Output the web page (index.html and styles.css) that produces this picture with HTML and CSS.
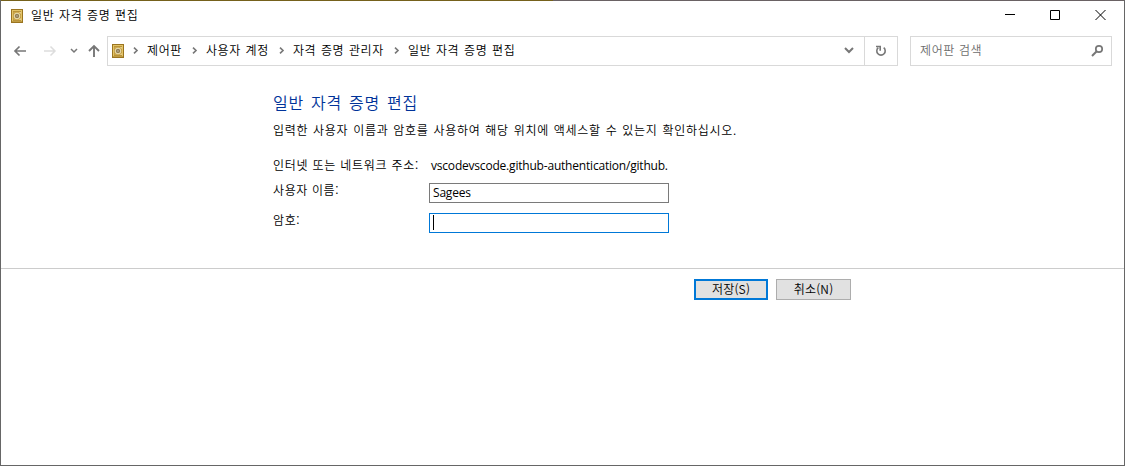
FILE: index.html
```html
<!DOCTYPE html>
<html lang="ko">
<head>
<meta charset="utf-8">
<title>일반 자격 증명 편집</title>
<link rel="stylesheet" href="styles.css">
</head>
<body>
<svg width="0" height="0" class="defs">
  <symbol id="vault" viewBox="0 0 12 14">
    <rect width="12" height="14" fill="#9a7420"/>
    <rect x="1" y="1" width="10" height="11.5" fill="#e3c466"/>
    <rect x="2" y="2" width="8" height="10" fill="#b8923a"/>
    <rect x="2.5" y="3" width="7" height="8" fill="#cda94e"/>
    <circle cx="6" cy="7" r="2.8" fill="#a08a58" stroke="#f1e6bd" stroke-width=".9"/>
    <circle cx="6" cy="7" r="1.1" fill="#eee8d5" stroke="#6b5730" stroke-width=".6"/>
    <path d="M8.5 3.5h1v1M9.5 9.5v1h-1" stroke="#f6e9b5" stroke-width=".8" fill="none"/>
  </symbol>
  <symbol id="chevron" viewBox="0 0 6 7"><path d="M1 .6 4 3.500 1 6.400" fill="none" stroke="#777" stroke-width="1.600"/></symbol>
</svg>
<div class="window">
  <header class="titlebar">
    <svg class="vault"><use href="#vault"/></svg>
    <span class="title">일반 자격 증명 편집</span>
    <div class="controls">
      <svg width="12" height="12"><path d="M1 5.500h10" stroke="#000"/></svg>
      <svg width="12" height="12"><path d="M1.500 1.500h9v9h-9z" stroke="#000" fill="none"/></svg>
      <svg width="12" height="12"><path d="M1.500 1l10 10M11.500 1l-10 10" stroke="#000"/></svg>
    </div>
  </header>
  <nav class="toolbar">
    <svg class="back" width="14" height="12"><path d="M13 6H2M6.500 1.500 2 6l4.500 4.500" stroke="#777" stroke-width="1.700" fill="none"/></svg>
    <svg class="forward" width="14" height="12"><path d="M1 6h11M7.500 1.500 12 6l-4.500 4.500" stroke="#ddd" stroke-width="1.500" fill="none"/></svg>
    <svg class="recent" width="8" height="6"><path d="M1 1l3 3 3-3" stroke="#777" stroke-width="1.500" fill="none"/></svg>
    <svg class="up" width="12" height="14"><path d="M6 13V2M1 7l5-5 5 5" stroke="#777" stroke-width="1.900" fill="none"/></svg>
    <div class="address">
      <svg class="vault"><use href="#vault"/></svg>
      <svg class="sep"><use href="#chevron"/></svg><span>제어판</span>
      <svg class="sep"><use href="#chevron"/></svg><span>사용자 계정</span>
      <svg class="sep"><use href="#chevron"/></svg><span>자격 증명 관리자</span>
      <svg class="sep"><use href="#chevron"/></svg><span>일반 자격 증명 편집</span>
      <svg class="drop" width="10" height="7"><path d="M1 1l4 4 4-4" stroke="#777" stroke-width="2" fill="none"/></svg>
      <div class="refresh"><svg width="12" height="12"><path d="M8.700 2.700A4.200 4.200 0 1 1 3.300 2.700" stroke="#777" stroke-width="1.600" fill="none"/><path d="M1 1.500h4.200v4.200" stroke="#777" stroke-width="1.600" fill="none"/></svg></div>
    </div>
    <div class="search"><span>제어판 검색</span>
      <svg width="13" height="13"><circle cx="8" cy="5" r="3.200" stroke="#777" stroke-width="1.700" fill="none"/><path d="M5.700 7.300 1 12" stroke="#777" stroke-width="2"/></svg>
    </div>
  </nav>
  <main class="content">
    <h1>일반 자격 증명 편집</h1>
    <p class="intro">입력한 사용자 이름과 암호를 사용하여 해당 위치에 액세스할 수 있는지 확인하십시오.</p>
    <div class="row address-row"><span class="label wide">인터넷 또는 네트워크 주소:</span><span class="latin host">vscodevscode.github-authentication/github.</span></div>
    <div class="row"><span class="label">사용자 이름:</span><div class="field latin">Sagees</div></div>
    <div class="row"><span class="label">암호:</span><div class="field active"><i class="caret"></i></div></div>
  </main>
  <footer class="actions">
    <button class="primary">저장(S)</button>
    <button>취소(N)</button>
  </footer>
</div>
</body>
</html>
```
FILE: styles.css
```css
* { box-sizing: border-box; }
body { margin: 0; font: 350 12px/16px "Noto Sans CJK KR", sans-serif; color: #000; }
svg { display: block; flex: none; }
.defs { position: absolute; }
.window { height: 466px; border: 1px solid #666; border-top: 0; background: linear-gradient(90deg, #75611b 552px, #6a6264 552px) top / 100% 1px no-repeat #fff; padding-top: 1px; overflow: hidden; white-space: nowrap; }
.titlebar { height: 29px; display: flex; align-items: center; padding-left: 10px; }
.vault { width: 12px; height: 14px; }
.title { margin: -2px 0 0 8px; letter-spacing: .6px; word-spacing: .8px; }
.controls { margin-left: auto; display: flex; gap: 33px; padding-right: 18px; }
.controls svg { margin-top: -1px; }
.toolbar { height: 41px; display: flex; align-items: center; padding-left: 12px; }
.forward { margin-left: 16px; }
.recent { margin-left: 13px; }
.up { margin-left: 10px; }
.address { width: 791px; height: 30px; margin-left: 7px; border: 1px solid #d9d9d9; display: flex; align-items: center; padding-left: 4px; }
.address span { letter-spacing: .6px; word-spacing: .8px; margin: -2px 0 0 8px; }
.sep { width: 6px; height: 7px; margin-left: 9px; }
.address span + .sep { margin-left: 10px; }
.drop { margin-left: auto; margin-right: 10px; }
.refresh { height: 28px; width: 33px; border-left: 1px solid #d9d9d9; display: grid; place-items: center; }
.search { width: 202px; height: 30px; margin-left: 12px; border: 1px solid #d9d9d9; display: flex; align-items: center; justify-content: space-between; padding: 0 7px 0 9px; color: #6d6d6d; letter-spacing: .6px; }
.search span { margin-top: -2px; }
.content { height: 197px; padding: 20px 0 0 272px; letter-spacing: .6px; }
h1 { margin: 0; font-size: 16px; line-height: 22px; font-weight: 350; color: #003399; letter-spacing: .7px; word-spacing: 2px; }
.intro { margin: 9px 0 0; letter-spacing: .71px; word-spacing: .8px; }
.row { display: flex; height: 30px; }
.label { width: 156px; margin-top: -1px; }
.wide { margin-top: 0; letter-spacing: .75px; }
.address-row { height: 26px; margin-top: 19px; }
.latin { font-family: "Open Sans", sans-serif; font-weight: 400; letter-spacing: -.2px; }
.host { padding: 1px 0 0 2px; }
.field { width: 240px; height: 20px; border: 1px solid #7a7a7a; padding: 1px 3px; }
.active { border-color: #0078d7; }
.caret { display: block; width: 1px; height: 15px; background: #000; }
.actions { border-top: 1px solid #ccc; display: flex; gap: 8px; padding: 10px 0 0 693px; }
button { width: 75px; height: 21px; padding: 0 0 2px; border: 1px solid #adadad; background: #e1e1e1; font: inherit; line-height: 15px; letter-spacing: .2px; color: #000; }
.primary { width: 74px; border: 2px solid #0078d7; }
```
